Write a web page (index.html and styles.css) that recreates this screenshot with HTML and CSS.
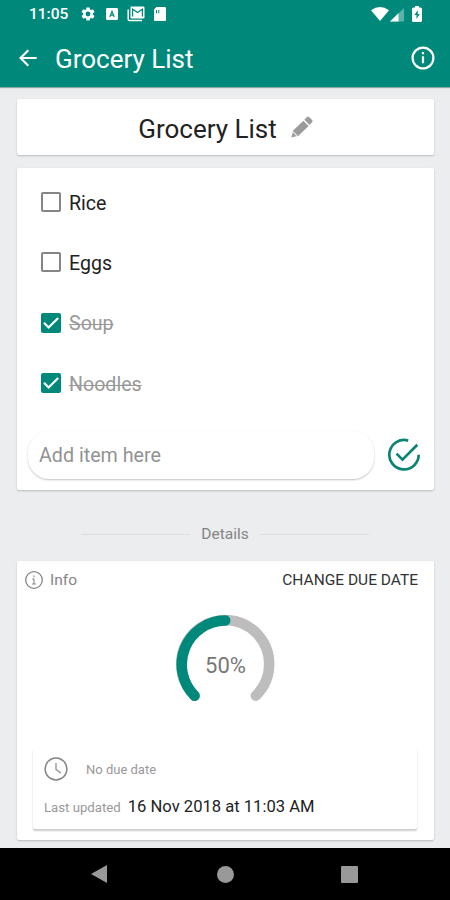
FILE: index.html
```html
<!DOCTYPE html>
<html lang="en">
<head>
<meta charset="utf-8">
<title>Grocery List</title>
<link rel="stylesheet" href="styles.css">
</head>
<body>
<header class="top">
  <div class="status">
    <span class="time">11:05</span>
    <svg class="gear" width="16" height="16" viewBox="0 0 24 24"><path fill="#fff" d="M19.4 13c.04-.3.06-.6.06-1s-.02-.7-.07-1l2.1-1.6a.5.5 0 0 0 .1-.6l-2-3.500a.5.5 0 0 0-.6-.2l-2.4 1a7 7 0 0 0-1.600-1l-.4-2.500a.5.5 0 0 0-.5-.4h-4a.5.5 0 0 0-.5.4L9.200 5.100a7 7 0 0 0-1.600 1l-2.400-1a.5.5 0 0 0-.6.2l-2 3.500a.5.5 0 0 0 .1.600L4.800 11a7 7 0 0 0 0 2l-2.100 1.600a.5.5 0 0 0-.1.600l2 3.500c.1.200.4.300.6.200l2.400-1a7 7 0 0 0 1.600 1l.4 2.500c0 .3.200.4.500.4h4c.2 0 .4-.1.500-.4l.4-2.500a7 7 0 0 0 1.600-1l2.400 1c.2.100.5 0 .6-.2l2-3.500a.5.5 0 0 0-.1-.600zM12 15.600a3.600 3.600 0 1 1 0-7.200 3.600 3.600 0 0 1 0 7.200z"/></svg>
    <svg class="letter" width="12" height="12" viewBox="0 0 12 12"><rect width="12" height="12" rx="1.200" fill="#fff"/><path d="M3.800 9 6 3.300 8.200 9M4.600 7.200h2.800" fill="none" stroke="#00897a" stroke-width="1.200"/></svg>
    <svg class="mail" width="18" height="16" viewBox="0 0 18 16"><path d="M1.200 3.500v9.800q0 1.200 1.200 1.200H15" fill="none" stroke="#fff" stroke-width="1.500"/><rect x="3.500" y=".5" width="14" height="12" rx="1.200" fill="#fff"/><path d="M5.600 10.500V3.200l4.900 3.400 4.900-3.400v7.300" fill="none" stroke="#00897a" stroke-width="1.200"/></svg>
    <svg class="sim" width="12" height="14" viewBox="0 0 12 14"><path fill="#fff" d="M2.500 0h8.300Q12 0 12 1.200v11.600q0 1.200-1.200 1.200H1.200Q0 14 0 12.800V2.500z"/><path d="M2.500 3v3.300M4.800 3v3.300" stroke="#00897a"/></svg>
    <span class="spacer"></span>
    <svg class="wifi" width="18" height="14" viewBox="0 0 18 14"><path fill="#fff" d="M0 3.200Q9-3 18 3.200L9 14z"/></svg>
    <svg class="signal" width="14" height="14" viewBox="0 0 14 14"><path fill="#5ab3aa" d="M14 0v13.500H0z"/><path fill="#fff" d="M8.500 5.300v8.200H0z"/></svg>
    <svg class="battery" width="10" height="16" viewBox="0 0 10 16"><path fill="#fff" d="M3 0h4v1.500h1.500Q10 1.500 10 3v11.500Q10 16 8.500 16h-7Q0 16 0 14.500V3q0-1.500 1.500-1.500H3z"/><path fill="#00897a" d="M5.700 4 2.500 9h2v4l3.200-5h-2z"/></svg>
  </div>
  <div class="appbar">
    <svg width="18" height="18" viewBox="0 0 18 18"><path d="M17.700 9H1.800M9.300 1.200 1.500 9l7.800 7.800" fill="none" stroke="#fff" stroke-width="2.200"/></svg>
    <h1>Grocery List</h1>
    <svg width="24" height="24" viewBox="0 0 24 24"><circle cx="12" cy="12" r="10.400" fill="none" stroke="#fff" stroke-width="2.200"/><path d="M12 6v2.300M12 10.300v7" stroke="#fff" stroke-width="2.200"/></svg>
  </div>
</header>
<main>
  <section class="card heading">
    <h2>Grocery List</h2>
    <svg width="22" height="22" viewBox="0 0 22 22"><path fill="#9b9b9b" d="m.3 21.500 1.900-7L12.300 4.700l5.300 5.200L7.500 19.700zM13.300 3.700 16 .9q1-.8 2 0l3.200 3.200q.8 1 0 2l-2.600 2.800z"/><path fill="#fff" d="m2.300 15.200 4.500 4.400-1.500.5-3.400-3.400z" opacity=".7"/></svg>
  </section>
  <section class="card list">
    <ul>
      <li><span class="box"></span><span class="name">Rice</span></li>
      <li><span class="box"></span><span class="name">Eggs</span></li>
      <li class="done"><span class="box"><svg width="20" height="20" viewBox="0 0 20 20"><path d="m3 9.800 4.600 4.700L17.200 5" fill="none" stroke="#fff" stroke-width="2.200"/></svg></span><span class="name">Soup</span></li>
      <li class="done"><span class="box"><svg width="20" height="20" viewBox="0 0 20 20"><path d="m3 9.800 4.600 4.700L17.200 5" fill="none" stroke="#fff" stroke-width="2.200"/></svg></span><span class="name">Noodles</span></li>
    </ul>
    <div class="add">
      <div class="field">Add item here</div>
      <svg width="34" height="34" viewBox="0 0 34 34"><path d="M21.200 2.600A14.700 14.700 0 1 0 31.700 16.800" fill="none" stroke="#0b8475" stroke-width="2.700"/><path d="m9.500 15.600 6 6L30.300 6.800" fill="none" stroke="#0b8475" stroke-width="2.700"/></svg>
    </div>
  </section>
  <div class="divider"><span>Details</span></div>
  <section class="card info">
    <div class="inforow">
      <svg width="18" height="18" viewBox="0 0 18 18"><circle cx="9" cy="9" r="8.300" fill="none" stroke="#858585" stroke-width="1.300"/><path d="M9 4.500v1.800M9 7.800V13M7.300 8.200H9M7 13h4" stroke="#909090" stroke-width="1.200"/></svg>
      <span class="label">Info</span>
      <span class="change">CHANGE DUE DATE</span>
    </div>
    <div class="gauge">
      <svg width="100" height="100" viewBox="0 0 100 100"><path d="M19.600 80.700A44 44 0 1 1 80.800 80.700" fill="none" stroke="#bdbdbd" stroke-width="10.500" stroke-linecap="round"/><path d="M19.600 80.700A44 44 0 0 1 50.200 5.600" fill="none" stroke="#00897a" stroke-width="10.500" stroke-linecap="round"/></svg>
      <span class="percent">50%</span>
    </div>
    <div class="dates">
      <div class="due"><svg width="24" height="24" viewBox="0 0 24 24"><circle cx="12" cy="12" r="10.900" fill="none" stroke="#858585" stroke-width="1.500"/><path d="M12 6v6.300l4.800 3.800" fill="none" stroke="#999" stroke-width="1.400"/></svg><span>No due date</span></div>
      <div class="updated"><span>Last updated</span><b>16 Nov 2018 at 11:03 AM</b></div>
    </div>
  </section>
</main>
<nav>
  <svg width="16" height="18" viewBox="0 0 16 18"><path fill="#999" d="M16 0v18L0 9z"/></svg>
  <span class="home"></span>
  <span class="recent"></span>
</nav>
</body>
</html>
```
FILE: styles.css
```css
* { box-sizing: border-box; }
body { margin: 0; width: 450px; height: 900px; display: flex; flex-direction: column; overflow: hidden; background: #ecedef; font-family: Roboto, sans-serif; color: #222; }
svg { display: block; flex: none; }
h1, h2, ul { margin: 0; padding: 0; font-weight: 400; }
span, h1, h2, b { white-space: nowrap; }
.top { height: 87px; flex: none; background: #00897a; color: #fff; box-shadow: 0 1px 1px #89aaa6; }
.status { height: 28px; display: flex; align-items: center; padding: 0 28px 0 29px; }
.time { font-size: 15.5px; font-weight: 500; width: 51px; line-height: 28px; }
.letter { margin-left: 10px; }
.mail { margin-left: 9px; }
.sim { margin-left: 9px; }
.spacer { flex: 1; }
.signal { margin: 2px 0 0 1px; }
.battery { margin-left: 8px; }
.appbar { height: 59px; display: flex; align-items: center; padding: 0 15px 0 19px; }
.appbar h1 { flex: 1; margin-left: 18px; font-size: 26px; line-height: 30px; padding-top: 3px; }
main { height: 761px; flex: none; padding: 12px 16px 0 17px; }
.card { background: #fff; border-radius: 2px; box-shadow: 0 1px 2px rgba(0,0,0,.22); }
.heading { height: 56px; display: flex; justify-content: center; align-items: center; gap: 14px; padding-left: 0; }
.heading h2 { font-size: 26px; line-height: 30px; padding-top: 3px; }
.list { height: 322px; margin-top: 13px; padding-top: 4px; }
ul { list-style: none; }
li { height: 60.300px; display: flex; align-items: center; padding-left: 24px; font-size: 19.600px; }
.box { width: 20px; height: 20px; border: 2px solid #858585; border-radius: 2px; margin-right: 8px; }
.done .box { border: 0; background: #00897a; }
.name { padding-top: 2px; }
.done .name { color: #999; text-decoration: line-through; text-decoration-thickness: 1px; }
.add { display: flex; align-items: center; margin: 18px 0 0 11px; }
.field { width: 346px; height: 48px; border-radius: 21px; box-shadow: 0 1px 2px rgba(0,0,0,.24); padding: 2px 0 0 11px; line-height: 46px; font-size: 19.700px; color: #929292; margin-right: 13px; }
.divider { height: 71px; display: flex; align-items: center; padding: 17px 65px 0 64px; gap: 11px; font-size: 15.500px; color: #858585; }
.divider::before, .divider::after { content: ""; flex: 1; height: 1px; background: #dddee0; }
.info { height: 279px; }
.inforow { height: 38px; display: flex; align-items: center; padding: 0 16px 0 8px; }
.label { font-size: 15.500px; color: #858585; margin-left: 7px; }
.change { margin-left: auto; font-size: 15.500px; color: #333; }
.gauge { display: grid; width: 100px; height: 100px; margin: 16px 0 0 158px; }
.gauge > * { grid-area: 1 / 1; }
.percent { place-self: center; font-size: 22px; color: #777; padding-left: 1px; }
.dates { width: 384px; height: 81px; margin: 33px 0 0 16px; border-radius: 0 0 2px 2px; box-shadow: 0 2px 2px rgba(0,0,0,.2); padding: 8px 10px 0 11px; clip-path: inset(0 -4px -5px); }
.due { height: 26px; display: flex; align-items: center; font-size: 13px; color: #999; }
.due span { margin-left: 18px; }
.updated { display: flex; align-items: baseline; gap: 7px; margin-top: 15px; font-size: 13.200px; color: #999; }
.updated b { font-size: 16.600px; font-weight: 400; color: #222; }
nav { height: 52px; flex: none; background: #000; display: flex; align-items: center; padding-left: 91px; }
.home { width: 17px; height: 17px; border-radius: 50%; background: #999; margin-left: 110px; }
.recent { width: 17px; height: 17px; background: #999; margin-left: 107px; border-radius: 1px; }
```
